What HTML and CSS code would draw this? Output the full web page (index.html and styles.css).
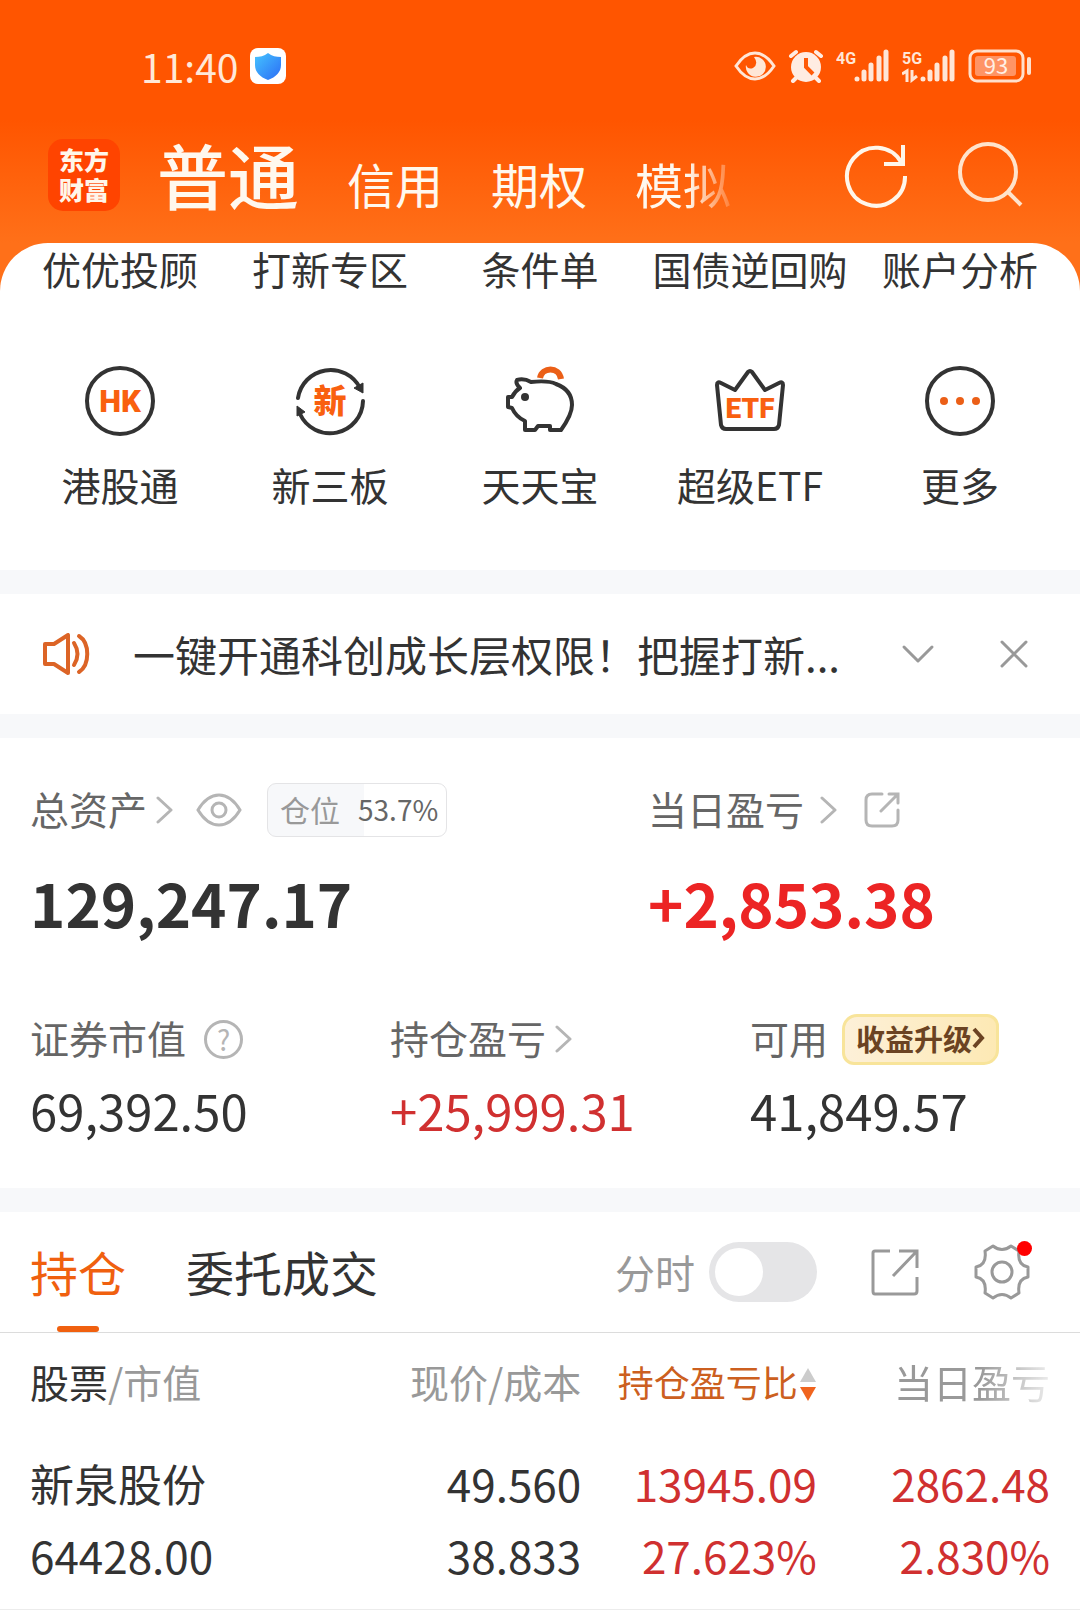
FILE: index.html
```html
<!DOCTYPE html>
<html lang="zh-CN">
<head>
    <meta charset="UTF-8">
    <meta name="viewport" content="width=device-width, initial-scale=1.0">
    <title>东方财富 - 持仓</title>
    <link rel="stylesheet" href="styles.css">
</head>
<body>
    <header class="header">
        <div class="status-bar">
            <span class="time">11:40</span>
            <svg class="shield" width="36" height="36" viewBox="0 0 36 36">
                <defs>
                    <linearGradient id="shieldFill" x1="0" y1="0" x2="1" y2="1">
                        <stop offset="0" stop-color="#45c4ff"/>
                        <stop offset="1" stop-color="#2b6cf5"/>
                    </linearGradient>
                </defs>
                <rect width="36" height="36" rx="8" fill="#fff"/>
                <path d="M18 5 C22 8 26 9 31 9 V17 C31 24 26 29 18 32 C10 29 5 24 5 17 V9 C10 9 14 8 18 5Z" fill="url(#shieldFill)"/>
            </svg>
            <div class="status-icons">
                <svg width="42" height="30" viewBox="0 0 42 30">
                    <path d="M2 15 C8 6 14 2 21 2 C28 2 34 6 40 15 C34 24 28 28 21 28 C14 28 8 24 2 15Z" fill="none" stroke="#ffe6d6" stroke-width="3"/>
                    <path d="M20 6 A10 10 0 1 1 12 14 Q14 19 19 17 Q25 13 20 6Z" fill="#ffe6d6"/>
                </svg>
                <svg width="36" height="34" viewBox="0 0 36 34">
                    <circle cx="18" cy="18" r="15" fill="#ffece2"/>
                    <path d="M3 7 L8 3 M33 7 L28 3 M8 29 L5 32 M28 29 L31 32" stroke="#ffece2" stroke-width="4" stroke-linecap="round"/>
                    <path d="M18 9 V18 L25 25" fill="none" stroke="#ff5a08" stroke-width="4"/>
                </svg>
                <svg width="54" height="34" viewBox="0 0 54 34">
                    <text class="net" x="0" y="15">4G</text>
                    <path d="M21 30 V30 M28 23 V30 M35 16 V30 M43 9 V30 M50 3 V30" stroke="#ffe6d6" stroke-width="5" stroke-linecap="round"/>
                </svg>
                <svg width="54" height="34" viewBox="0 0 54 34">
                    <text class="net" x="0" y="15">5G</text>
                    <path d="M0 25 L5 22 V33 M10 21 V31 L15 27" fill="none" stroke="#ffe6d6" stroke-width="3"/>
                    <path d="M21 30 V30 M28 23 V30 M35 16 V30 M43 9 V30 M50 3 V30" stroke="#ffe6d6" stroke-width="5" stroke-linecap="round"/>
                </svg>
                <svg width="64" height="34" viewBox="0 0 64 34">
                    <rect x="2" y="2" width="53" height="30" rx="7" fill="none" stroke="#ffe0cc" stroke-width="3"/>
                    <rect x="7" y="7" width="41" height="20" rx="3" fill="#ff9465"/>
                    <path d="M61 10 V24" stroke="#ffe0cc" stroke-width="4" stroke-linecap="round"/>
                    <text class="battery" x="28" y="25" text-anchor="middle">93</text>
                </svg>
            </div>
        </div>

        <div class="nav">
            <a href="#" class="logo">东方<br>财富</a>
            <nav class="accounts">
                <a href="#" class="current">普通</a>
                <a href="#">信用</a>
                <a href="#">期权</a>
                <a href="#" class="faded">模拟</a>
            </nav>
            <button class="icon-button" aria-label="刷新">
                <svg width="66" height="66" viewBox="0 0 66 66" fill="none" stroke="#fff6ea" stroke-width="4">
                    <path d="M62 34 A29 29 0 1 1 58 20"/>
                    <path d="M60 3 V22 H41"/>
                </svg>
            </button>
            <button class="icon-button" aria-label="搜索">
                <svg width="66" height="66" viewBox="0 0 66 66" fill="none" stroke="#ffe3cb" stroke-width="4">
                    <circle cx="31" cy="30" r="28"/>
                    <path d="M51 50 L64 63"/>
                </svg>
            </button>
        </div>
    </header>

    <main>
        <section class="shortcuts">
            <a href="#">优优投顾</a>
            <a href="#">打新专区</a>
            <a href="#">条件单</a>
            <a href="#">国债逆回购</a>
            <a href="#">账户分析</a>
            <a href="#">
                <svg width="72" height="72" viewBox="0 0 72 72">
                    <circle cx="36" cy="36" r="33" fill="none" stroke="#333" stroke-width="4"/>
                    <text class="icon-text" x="36" y="47" font-size="31">HK</text>
                </svg>
                港股通
            </a>
            <a href="#">
                <svg width="72" height="72" viewBox="0 0 72 72">
                    <path d="M4 33 A33 33 0 0 1 66 23 M69 36 A33 33 0 0 1 6 49" fill="none" stroke="#333" stroke-width="4" stroke-linecap="round"/>
                    <path d="M60 23 L69 18 V28Z M3 41 V51 L11 47Z" fill="#333" stroke="#333"/>
                    <text class="icon-text" x="36" y="48" font-size="33">新</text>
                </svg>
                新三板
            </a>
            <a href="#">
                <svg width="72" height="72" viewBox="0 0 72 72" fill="none" stroke="#333" stroke-width="4" stroke-linejoin="round">
                    <path d="M4 32 H8 Q11 26 16 23 Q11 18 13 15 Q20 13 27 17 C36 16 46 16 52 19 C63 23 68 30 68 40 C68 49 62 58 57 65 H46 V61 H34 L31 65 H21 V56 Q12 52 8 43 L4 42Z"/>
                    <circle cx="21" cy="32" r="4" fill="#333" stroke="none"/>
                    <path d="M36 13 C38 2 55 1 57 14" stroke="#eb5f17" stroke-width="6"/>
                </svg>
                天天宝
            </a>
            <a href="#">
                <svg width="72" height="72" viewBox="0 0 72 72">
                    <path d="M3 20 Q3 16 7 18 L21 25 L34 7 Q36 5 38 7 L51 25 L65 18 Q69 16 69 20 L65 60 Q64 64 60 64 H12 Q8 64 7 60Z" fill="none" stroke="#333" stroke-width="4" stroke-linejoin="round"/>
                    <text class="icon-text" x="36" y="53" font-size="28">ETF</text>
                </svg>
                超级ETF
            </a>
            <a href="#">
                <svg width="72" height="72" viewBox="0 0 72 72">
                    <circle cx="36" cy="36" r="33" fill="none" stroke="#333" stroke-width="4"/>
                    <g fill="#eb5f17">
                        <circle cx="20" cy="36" r="4"/>
                        <circle cx="36" cy="36" r="4"/>
                        <circle cx="52" cy="36" r="4"/>
                    </g>
                </svg>
                更多
            </a>
        </section>

        <section class="notice">
            <svg width="48" height="42" viewBox="0 0 48 42" fill="none" stroke="#dc6426" stroke-width="4" stroke-linejoin="round" stroke-linecap="round">
                <path d="M3 11 H12 L26 2 V40 L12 31 H3Z"/>
                <path d="M32 10 Q39 21 32 32 M37 3 C48 10 48 32 37 39"/>
            </svg>
            <p>一键开通科创成长层权限！把握打新...</p>
            <button class="icon-button" aria-label="展开">
                <svg width="36" height="36" viewBox="0 0 36 36" fill="none" stroke="#999" stroke-width="3" stroke-linecap="round" stroke-linejoin="round">
                    <path d="M4 11 L18 25 L32 11"/>
                </svg>
            </button>
            <button class="icon-button" aria-label="关闭">
                <svg width="36" height="36" viewBox="0 0 36 36" fill="none" stroke="#999" stroke-width="3" stroke-linecap="round">
                    <path d="M6 6 L30 30 M30 6 L6 30"/>
                </svg>
            </button>
        </section>

        <section class="assets">
            <div class="totals">
                <div>
                    <div class="label-row">
                        <a href="#" class="label">总资产</a>
                        <svg class="arrow" width="18" height="28" viewBox="0 0 18 28"><path d="M2 2 L15 14 L2 26"/></svg>
                        <button class="icon-button eye" aria-label="隐藏金额">
                            <svg width="46" height="34" viewBox="0 0 46 34" fill="none" stroke="#b5b5b5" stroke-width="3">
                                <path d="M2 17 C8 7 15 2 23 2 C31 2 38 7 44 17 C38 27 31 32 23 32 C15 32 8 27 2 17Z"/>
                                <circle cx="23" cy="17" r="7"/>
                            </svg>
                        </button>
                        <span class="position"><span>仓位</span><b>53.7%</b></span>
                    </div>
                    <div class="total">129,247.17</div>
                </div>
                <div>
                    <div class="label-row">
                        <a href="#" class="label">当日盈亏</a>
                        <svg class="arrow today-arrow" width="18" height="28" viewBox="0 0 18 28"><path d="M2 2 L15 14 L2 26"/></svg>
                        <button class="icon-button share" aria-label="分享盈亏">
                            <svg width="36" height="36" viewBox="0 0 36 36" fill="none" stroke="#b5b5b5" stroke-width="3" stroke-linecap="round">
                                <path d="M18 2 H8 Q2 2 2 8 V28 Q2 34 8 34 H28 Q34 34 34 28 V18"/>
                                <path d="M25 2 H34 V11 M34 2 L17 19"/>
                            </svg>
                        </button>
                    </div>
                    <div class="total bright">+2,853.38</div>
                </div>
            </div>
            <div class="details">
                <div>
                    <div class="label-row">
                        <span class="label">证券市值</span>
                        <button class="help" aria-label="说明">?</button>
                    </div>
                    <div class="value">69,392.50</div>
                </div>
                <div>
                    <div class="label-row">
                        <a href="#" class="label">持仓盈亏</a>
                        <svg class="arrow" width="18" height="28" viewBox="0 0 18 28"><path d="M2 2 L15 14 L2 26"/></svg>
                    </div>
                    <div class="value up">+25,999.31</div>
                </div>
                <div>
                    <div class="label-row">
                        <span class="label">可用</span>
                        <a href="#" class="upgrade">收益升级<svg width="14" height="22" viewBox="0 0 14 22"><path d="M2 2 L10 11 L2 20" fill="none" stroke="#6b4322" stroke-width="4"/></svg></a>
                    </div>
                    <div class="value">41,849.57</div>
                </div>
            </div>
        </section>

        <section class="holdings">
            <div class="tabs">
                <button class="tab active">持仓</button>
                <button class="tab">委托成交</button>
                <label class="minute">分时<input type="checkbox"></label>
                <button class="icon-button export" aria-label="分享持仓">
                    <svg width="48" height="48" viewBox="0 0 48 48" fill="none" stroke="#999" stroke-width="3">
                        <path d="M19 3 H4 Q2 3 2 5 V43 Q2 46 4 46 H43 Q46 46 46 43 V29"/>
                        <path d="M28 3 H46 V20 M45 4 L22 28"/>
                    </svg>
                </button>
                <button class="icon-button settings" aria-label="设置">
                    <svg width="60" height="58" viewBox="0 0 60 58" fill="none" stroke="#999" stroke-width="3" stroke-linejoin="round">
                        <path d="M21 3 Q30 10 39 3 L47 8 Q45 22 56 24 V34 Q45 36 47 50 L39 55 Q30 48 21 55 L13 50 Q15 36 4 34 V24 Q15 22 13 8Z"/>
                        <circle cx="30" cy="29" r="10"/>
                    </svg>
                </button>
            </div>
            <table>
                <thead>
                    <tr>
                        <th><b>股票</b>/市值</th>
                        <th>现价/成本</th>
                        <th class="sorted">持仓盈亏比<svg width="17" height="36" viewBox="0 0 17 36"><path d="M8 1 L16 15 H0Z" fill="#ccc"/><path d="M0 20 H16 L8 34Z" fill="#f0641e"/></svg></th>
                        <th><span class="faded">当日盈亏</span></th>
                    </tr>
                </thead>
                <tbody>
                    <tr>
                        <td>新泉股份<br>64428.00</td>
                        <td>49.560<br>38.833</td>
                        <td class="up">13945.09<br>27.623%</td>
                        <td class="up">2862.48<br>2.830%</td>
                    </tr>
                </tbody>
            </table>
        </section>
    </main>
</body>
</html>
```

FILE: styles.css
```css
* { box-sizing: border-box; }
body { margin: 0; background-color: #fff; color: #333; font-family: "Noto Sans CJK SC", "Noto Sans", sans-serif; font-size: 39px; line-height: 50px; }
a { color: inherit; text-decoration: none; }
button { font-family: inherit; background: none; border: none; padding: 0; margin: 0; cursor: pointer; }
svg { display: block; flex: none; }
p { margin: 0; }

.icon-button { flex: none; }
.up { color: #d03030; }
.bright { color: #ec2424; }
.faded {
    -webkit-mask-image: linear-gradient(to right, #000 55%, transparent 110%);
    mask-image: linear-gradient(to right, #000 55%, transparent 110%);
}

/* header */
.header {
    background: linear-gradient(#ff5500 120px, #ff7019 243px);
    padding-bottom: 48px;
}
.status-bar { display: flex; align-items: center; height: 132px; padding: 0 48px 0 141px; }
.time { color: #ffe8d8; font-size: 39px; margin-right: 12px; }
.status-icons { display: flex; align-items: center; gap: 12px; margin-left: auto; }
.net { font: bold 16px Roboto, sans-serif; fill: #ffe6d6; }
.battery { font: 22px "Noto Sans CJK SC", sans-serif; fill: #fff0e6; }

.nav { display: flex; align-items: center; height: 111px; padding: 0 57px 25px 48px; }
.nav > .icon-button { margin-left: 48px; }
.logo {
    flex: none;
    width: 72px;
    height: 72px;
    padding-top: 5px;
    border-radius: 15px;
    background-color: #ff4400;
    color: #fff6ea;
    font-size: 25px;
    font-weight: 900;
    line-height: 30px;
    text-align: center;
}
.accounts { flex: 1; display: flex; align-items: baseline; gap: 48px; margin-left: 37px; padding-top: 6px; color: #fff8ee; font-size: 48px; line-height: 80px; white-space: nowrap; }
.accounts .current { font-size: 71px; font-weight: 500; }

/* shortcuts */
main { position: relative; margin-top: -48px; }
.shortcuts {
    display: grid;
    grid-template-columns: repeat(5, 1fr);
    row-gap: 72px;
    padding: 0 15px 61px;
    border-radius: 48px 48px 0 0;
    background-color: #fff;
    text-align: center;
    white-space: nowrap;
}
.shortcuts svg { margin: 0 auto 22px; }
.icon-text { font-family: Roboto, "Noto Sans CJK SC", sans-serif; font-weight: 900; fill: #f9600f; text-anchor: middle; }

.notice, .assets, .holdings { border-top: 24px solid #f7f8fa; }

/* notice */
.notice { display: flex; align-items: center; height: 144px; padding: 0 48px 0 42px; }
.notice p { flex: 1; margin-left: 43px; font-size: 42px; line-height: 64px; white-space: nowrap; }
.notice .icon-button { margin-left: 60px; }

/* assets */
.assets { padding: 45px 0 48px; }
.totals { display: grid; grid-template-columns: 3fr 2fr; }
.details { display: grid; grid-template-columns: repeat(3, 1fr); margin-top: 74px; }
.totals > div, .details > div { padding-left: 30px; }
.totals > div + div { padding-left: 0; }
.label-row { display: flex; align-items: center; height: 54px; white-space: nowrap; }
.label { color: #666; padding-bottom: 4px; }
.arrow { margin-left: 9px; fill: none; stroke: #b5b5b5; stroke-width: 3; stroke-linecap: round; stroke-linejoin: round; }
.today-arrow { margin-left: 16px; }
.eye { margin-left: 22px; }
.share { margin-left: 26px; }
.position {
    display: flex;
    align-items: center;
    height: 54px;
    margin-left: 25px;
    padding: 0 8px 2px 12px;
    gap: 18px;
    border: 1px solid #e4e4e6;
    border-radius: 9px;
    background: linear-gradient(to right, #f7f8fa 54%, #fff 54%);
    color: #999;
    font-size: 30px;
}
.position b { color: #666; font-size: 28px; font-weight: normal; }
.total { margin-top: 29px; font-size: 60px; font-weight: bold; line-height: 72px; }
.value { margin-top: 14px; font-size: 49px; line-height: 60px; }
.help { width: 39px; height: 39px; margin-left: 18px; border: 3px solid #b5b5b5; border-radius: 50%; color: #b5b5b5; font-size: 28px; line-height: 30px; }
.upgrade {
    display: flex;
    align-items: center;
    height: 51px;
    margin-left: 14px;
    padding: 0 10px 3px 11px;
    border: 3px solid #f8e49a;
    border-radius: 15px 12px 15px 12px;
    background: linear-gradient(to right, #fdf0d8, #fde9b4);
    color: #6b4322;
    font-size: 29px;
    font-weight: bold;
}

/* holdings */
.tabs { display: flex; align-items: center; height: 121px; padding: 0 48px 0 30px; border-bottom: 1px solid #dcdcdc; }
.tab { position: relative; height: 120px; margin-right: 60px; padding-bottom: 2px; color: #333; font-size: 48px; white-space: nowrap; }
.tab.active { color: #f0600f; }
.tab.active::after {
    content: "";
    position: absolute;
    left: 27px;
    right: 27px;
    bottom: 0;
    height: 6px;
    border-radius: 3px;
    background-color: #f0600f;
}
.minute { display: flex; align-items: center; gap: 14px; margin-left: auto; color: #999; font-size: 40px; white-space: nowrap; }
.minute input {
    appearance: none;
    width: 108px;
    height: 60px;
    margin: 0;
    padding: 6px;
    border-radius: 30px;
    background-color: #e5e5e7;
}
.minute input::before { content: ""; display: block; width: 48px; height: 48px; border-radius: 50%; background-color: #fff; }
.minute input:checked::before { margin-left: auto; }
.export { margin-left: 54px; }
.settings { position: relative; margin-left: 53px; }
.settings::after {
    content: "";
    position: absolute;
    top: -2px;
    right: 0;
    width: 15px;
    height: 15px;
    border-radius: 50%;
    background-color: #f00;
}

table { width: 100%; table-layout: fixed; border-collapse: collapse; white-space: nowrap; }
th { height: 96px; padding: 0; color: #999; font-weight: normal; text-align: right; }
th b { color: #333; font-weight: normal; }
th .faded { display: inline-block; }
th.sorted { color: #cc5f20; font-size: 36px; }
.sorted svg { display: inline-block; margin-left: 2px; vertical-align: -6px; }
td { padding: 18px 0; font-size: 44px; line-height: 72px; text-align: right; border-bottom: 1px solid #ececec; }
th:first-child, td:first-child { width: 31%; padding-left: 30px; text-align: left; }
th:nth-child(2), td:nth-child(2) { width: 23%; padding-right: 2px; }
th:nth-child(3), td:nth-child(3) { padding-right: 4px; }
th:last-child, td:last-child { width: 24%; padding-right: 30px; }
```
